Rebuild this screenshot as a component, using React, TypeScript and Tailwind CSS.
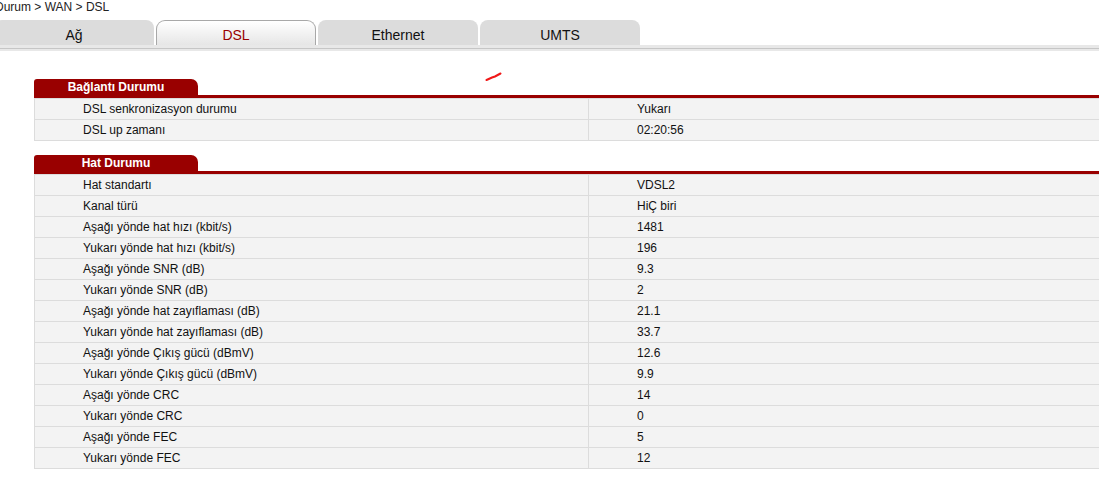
import React from "react";

const rows1: [string, string][] = [
  ["DSL senkronizasyon durumu", "Yukarı"],
  ["DSL up zamanı", "02:20:56"],
];

const rows2: [string, string][] = [
  ["Hat standartı", "VDSL2"],
  ["Kanal türü", "HiÇ biri"],
  ["Aşağı yönde hat hızı (kbit/s)", "1481"],
  ["Yukarı yönde hat hızı (kbit/s)", "196"],
  ["Aşağı yönde SNR (dB)", "9.3"],
  ["Yukarı yönde SNR (dB)", "2"],
  ["Aşağı yönde hat zayıflaması (dB)", "21.1"],
  ["Yukarı yönde hat zayıflaması (dB)", "33.7"],
  ["Aşağı yönde Çıkış gücü (dBmV)", "12.6"],
  ["Yukarı yönde Çıkış gücü (dBmV)", "9.9"],
  ["Aşağı yönde CRC", "14"],
  ["Yukarı yönde CRC", "0"],
  ["Aşağı yönde FEC", "5"],
  ["Yukarı yönde FEC", "12"],
];

function Section({ title, rows }: { title: string; rows: [string, string][] }) {
  return (
    <div className="ml-[34px] w-[1100px]">
      <div className="flex">
        <div className="w-[164px] h-[16px] bg-[#990000] rounded-tr-[7px] rounded-tl-[3px] text-white font-bold text-[12px] leading-[16px] text-center">
          {title}
        </div>
      </div>
      <div className="h-[3px] bg-[#990000]" />
      <div className="border-t border-l border-[#dcdcdc] bg-[#f3f3f3]">
        {rows.map(([k, v]) => (
          <div key={k} className="flex h-[21px] border-b border-[#dcdcdc] text-[12px] leading-[20px] text-[#111]">
            <div className="w-[554px] border-r border-[#dcdcdc] pl-[48px]">{k}</div>
            <div className="pl-[48px]">{v}</div>
          </div>
        ))}
      </div>
    </div>
  );
}

export default function App() {
  return (
    <div
      className="relative w-full h-[493px] bg-white overflow-hidden"
      style={{ fontFamily: '"Liberation Sans", Arial, sans-serif' }}
    >
      <div className="ml-[-5px] h-[15px] text-[12px] leading-[15px] text-[#222] whitespace-nowrap">
        Durum &gt; WAN &gt; DSL
      </div>
      <div className="flex gap-[2px] ml-[-6px] mt-[5px] h-[25px]">
        <div className="w-[160px] h-[25px] pt-[5px] bg-[#dcdcdc] rounded-t-[8px] text-center text-[14px] leading-[20px] text-[#111]">
          Ağ
        </div>
        <div className="w-[160px] h-[25px] pt-[4px] border border-b-0 border-[#a8a8a8] rounded-t-[9px] bg-gradient-to-b from-[#ffffff] to-[#e6e6e6] text-center text-[14px] leading-[20px] text-[#990000]">
          DSL
        </div>
        <div className="w-[160px] h-[25px] pt-[5px] bg-[#dcdcdc] rounded-t-[8px] text-center text-[14px] leading-[20px] text-[#111]">
          Ethernet
        </div>
        <div className="w-[160px] h-[25px] pt-[5px] bg-[#dcdcdc] rounded-t-[8px] text-center text-[14px] leading-[20px] text-[#111]">
          UMTS
        </div>
      </div>
      <div className="h-[6px] bg-[#e8e8e8] flex flex-col">
        <div className="h-[3px]" />
        <div className="h-[1px] bg-[#c6c6c6]" />
      </div>
      <div className="mt-[28px]">
        <Section title="Bağlantı Durumu" rows={rows1} />
      </div>
      <div className="mt-[14px]">
        <Section title="Hat Durumu" rows={rows2} />
      </div>
      <svg className="absolute left-[484px] top-[71px]" width="20" height="12" viewBox="0 0 20 12">
        <path d="M2.5 9 L8 6.5 L11 5.5 L16.5 2.5" stroke="#f01818" strokeWidth="2" fill="none" strokeLinecap="round" />
      </svg>
    </div>
  );
}
